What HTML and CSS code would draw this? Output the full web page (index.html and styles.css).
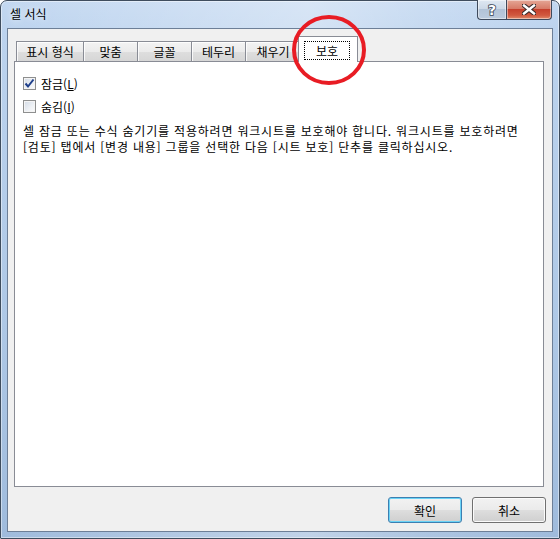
FILE: index.html
```html
<!DOCTYPE html>
<html lang="ko">
<head>
<meta charset="utf-8">
<title>셀 서식</title>
<link rel="stylesheet" href="styles.css">
</head>
<body>
<div class="window">
  <div class="titlebar">
    <span class="title">셀 서식</span>
    <div class="caption-buttons">
      <div class="cbtn help">
        <svg width="14" height="15" viewBox="0 0 14 15"><text x="7" y="13" class="help-glyph">?</text></svg>
      </div>
      <div class="cbtn close">
        <svg width="14" height="11" viewBox="0 0 14 11"><path d="M2 1.5 L12 9.5 M12 1.5 L2 9.5" class="x-outline"/><path d="M2 1.5 L12 9.5 M12 1.5 L2 9.5" class="x-fill"/></svg>
      </div>
    </div>
  </div>
  <div class="client">
    <div class="tabs">
      <div class="tab t1">표시 형식</div>
      <div class="tab t2">맞춤</div>
      <div class="tab t3">글꼴</div>
      <div class="tab t4">테두리</div>
      <div class="tab t5">채우기</div>
      <div class="tab selected"><span class="focus">보호</span></div>
    </div>
    <div class="panel">
      <div class="check">
        <span class="box"><svg width="11" height="11" viewBox="0 0 11 11"><path d="M1.5 5.5 L4 8.5 L9.5 1.5" class="tick"/></svg></span>
        <span>잠금(<u>L</u>)</span>
      </div>
      <div class="check">
        <span class="box"></span>
        <span>숨김(<u>I</u>)</span>
      </div>
      <p class="note">셀 잠금 또는 수식 숨기기를 적용하려면 워크시트를 보호해야 합니다. 워크시트를 보호하려면<br>[검토] 탭에서 [변경 내용] 그룹을 선택한 다음 [시트 보호] 단추를 클릭하십시오.</p>
    </div>
    <div class="buttons">
      <div class="btn default">확인</div>
      <div class="btn">취소</div>
    </div>
  </div>
  <svg class="annotation" width="80" height="76" viewBox="0 0 80 76"><ellipse cx="39" cy="37" rx="35" ry="33"/></svg>
</div>
</body>
</html>
```

FILE: styles.css
```css
* { box-sizing: border-box; }
html, body { margin: 0; padding: 0; }
body {
  width: 560px;
  height: 539px;
  font-family: "Noto Sans CJK KR", "Noto Sans", sans-serif;
  font-size: 12px;
  color: #000;
  overflow: hidden;
  background: #fff;
}
.window {
  position: relative;
  width: 560px;
  height: 539px;
  border: 1px solid #3f4d5e;
  border-radius: 7px 7px 1px 1px;
  padding: 0 6px 6px;
  display: flex;
  flex-direction: column;
  background:
    linear-gradient(90deg, rgba(255,255,255,0) 0%, rgba(255,255,255,0.35) 55%, rgba(255,255,255,0.15) 75%, rgba(255,255,255,0) 100%),
    linear-gradient(180deg, #c3d8f1 0%, #bcd3ee 6%, #aec8e6 60%, #9fbbdc 100%);
  box-shadow: inset 0 0 0 1px rgba(255,255,255,0.45);
}
.titlebar {
  height: 27px;
  display: flex;
  align-items: flex-start;
  justify-content: space-between;
  padding-left: 3px;
  padding-right: 1px;
}
.title {
  margin-top: 5px;
  line-height: 16px;
  font-size: 12px;
  color: #000;
  text-shadow: 0 0 6px rgba(255,255,255,0.9);
}
.caption-buttons {
  display: flex;
  margin-top: -1px;
  height: 20px;
}
.cbtn {
  height: 20px;
  border: 1px solid #3e4a5c;
  border-top: none;
  display: flex;
  align-items: center;
  justify-content: center;
  box-shadow: inset 0 0 0 1px rgba(255,255,255,0.45);
}
.help {
  width: 29px;
  border-radius: 0 0 0 4px;
  border-right: none;
  background: linear-gradient(180deg, #dfe8f2 0%, #cdd9e7 45%, #b2c3d7 50%, #bccbdd 100%);
}
.close {
  width: 46px;
  border-radius: 0 0 4px 0;
  background: linear-gradient(180deg, #e5a796 0%, #d77c68 45%, #c6412d 50%, #d1583f 80%, #e08a6a 100%);
}
.help-glyph {
  font-family: "DejaVu Sans", sans-serif;
  font-weight: bold;
  font-size: 14px;
  text-anchor: middle;
  fill: #fff;
  stroke: #3a4656;
  stroke-width: 1.6px;
  paint-order: stroke;
}
.x-outline { stroke: #3b2a2a; stroke-width: 4.6; stroke-linecap: square; fill: none; }
.x-fill { stroke: #fff; stroke-width: 2.4; stroke-linecap: square; fill: none; }

.client {
  flex: 1;
  border: 1px solid #6d7f97;
  background: #f0f0f0;
  display: flex;
  flex-direction: column;
}
.tabs {
  height: 32px;
  display: flex;
  align-items: flex-end;
  padding-left: 8px;
  position: relative;
  z-index: 1;
}
.tab {
  height: 20px;
  border: 1px solid #898c95;
  border-bottom: none;
  margin-right: -1px;
  background: linear-gradient(180deg, #f3f3f3 0%, #ebebeb 50%, #dedede 51%, #d6d6d6 100%);
  display: flex;
  align-items: center;
  justify-content: center;
  line-height: 16px;
  padding-top: 1px;
  box-shadow: inset 1px 1px 0 rgba(255,255,255,0.8);
}
.t1 { width: 68px; }
.t2, .t3, .t4 { width: 55px; }
.t5 { width: 56px; }
.tab.selected {
  width: 60px;
  height: 26px;
  margin-left: -2px;
  margin-right: 0;
  margin-bottom: -1px;
  background: #fff;
  box-shadow: none;
  position: relative;
  align-items: flex-start;
  padding-top: 4px;
  padding-right: 2px;
}
.focus {
  width: 46px;
  height: 19px;
  border: 1px dotted #000;
  display: flex;
  align-items: center;
  justify-content: center;
  line-height: 16px;
}
.panel {
  height: 426px;
  margin: 0 8px 0 6px;
  border: 1px solid #898c95;
  background: #fff;
  padding: 15px 8px 0 8px;
}
.check {
  display: flex;
  align-items: center;
  height: 13px;
  gap: 5px;
  margin-bottom: 10px;
  line-height: 16px;
}
.check u { text-decoration-thickness: 1px; text-underline-offset: 1px; }
.box {
  width: 13px;
  height: 13px;
  border: 1px solid #8e8f8f;
  background: linear-gradient(135deg, #d3dbe6 0%, #eef1f5 60%, #fbfbfb 100%);
  box-shadow: inset 0 0 0 1px #f4f4f4;
  display: flex;
  align-items: center;
  justify-content: center;
  flex-shrink: 0;
}
.tick { fill: none; stroke: #1f3f8a; stroke-width: 2; stroke-linejoin: miter; }
.note {
  margin: 6px 0 0;
  line-height: 16px;
  letter-spacing: 0.8px;
  white-space: nowrap;
}
.buttons {
  display: flex;
  justify-content: flex-end;
  gap: 10px;
  padding: 10px 6px 0 0;
}
.btn {
  width: 74px;
  height: 26px;
  border: 1px solid #707070;
  border-radius: 3px;
  background: linear-gradient(180deg, #f2f2f2 0%, #ebebeb 48%, #dddddd 52%, #cfcfcf 100%);
  box-shadow: inset 0 0 0 1px #fbfbfb;
  display: flex;
  align-items: center;
  justify-content: center;
  line-height: 16px;
  padding-top: 1px;
}
.btn.default {
  border-color: #3c7fb1;
  box-shadow: inset 0 0 0 1px #6ad3f6;
}
.annotation {
  position: absolute;
  left: 289px;
  top: 12px;
  z-index: 5;
}
.annotation ellipse {
  fill: none;
  stroke: #e81c24;
  stroke-width: 4;
}
```
